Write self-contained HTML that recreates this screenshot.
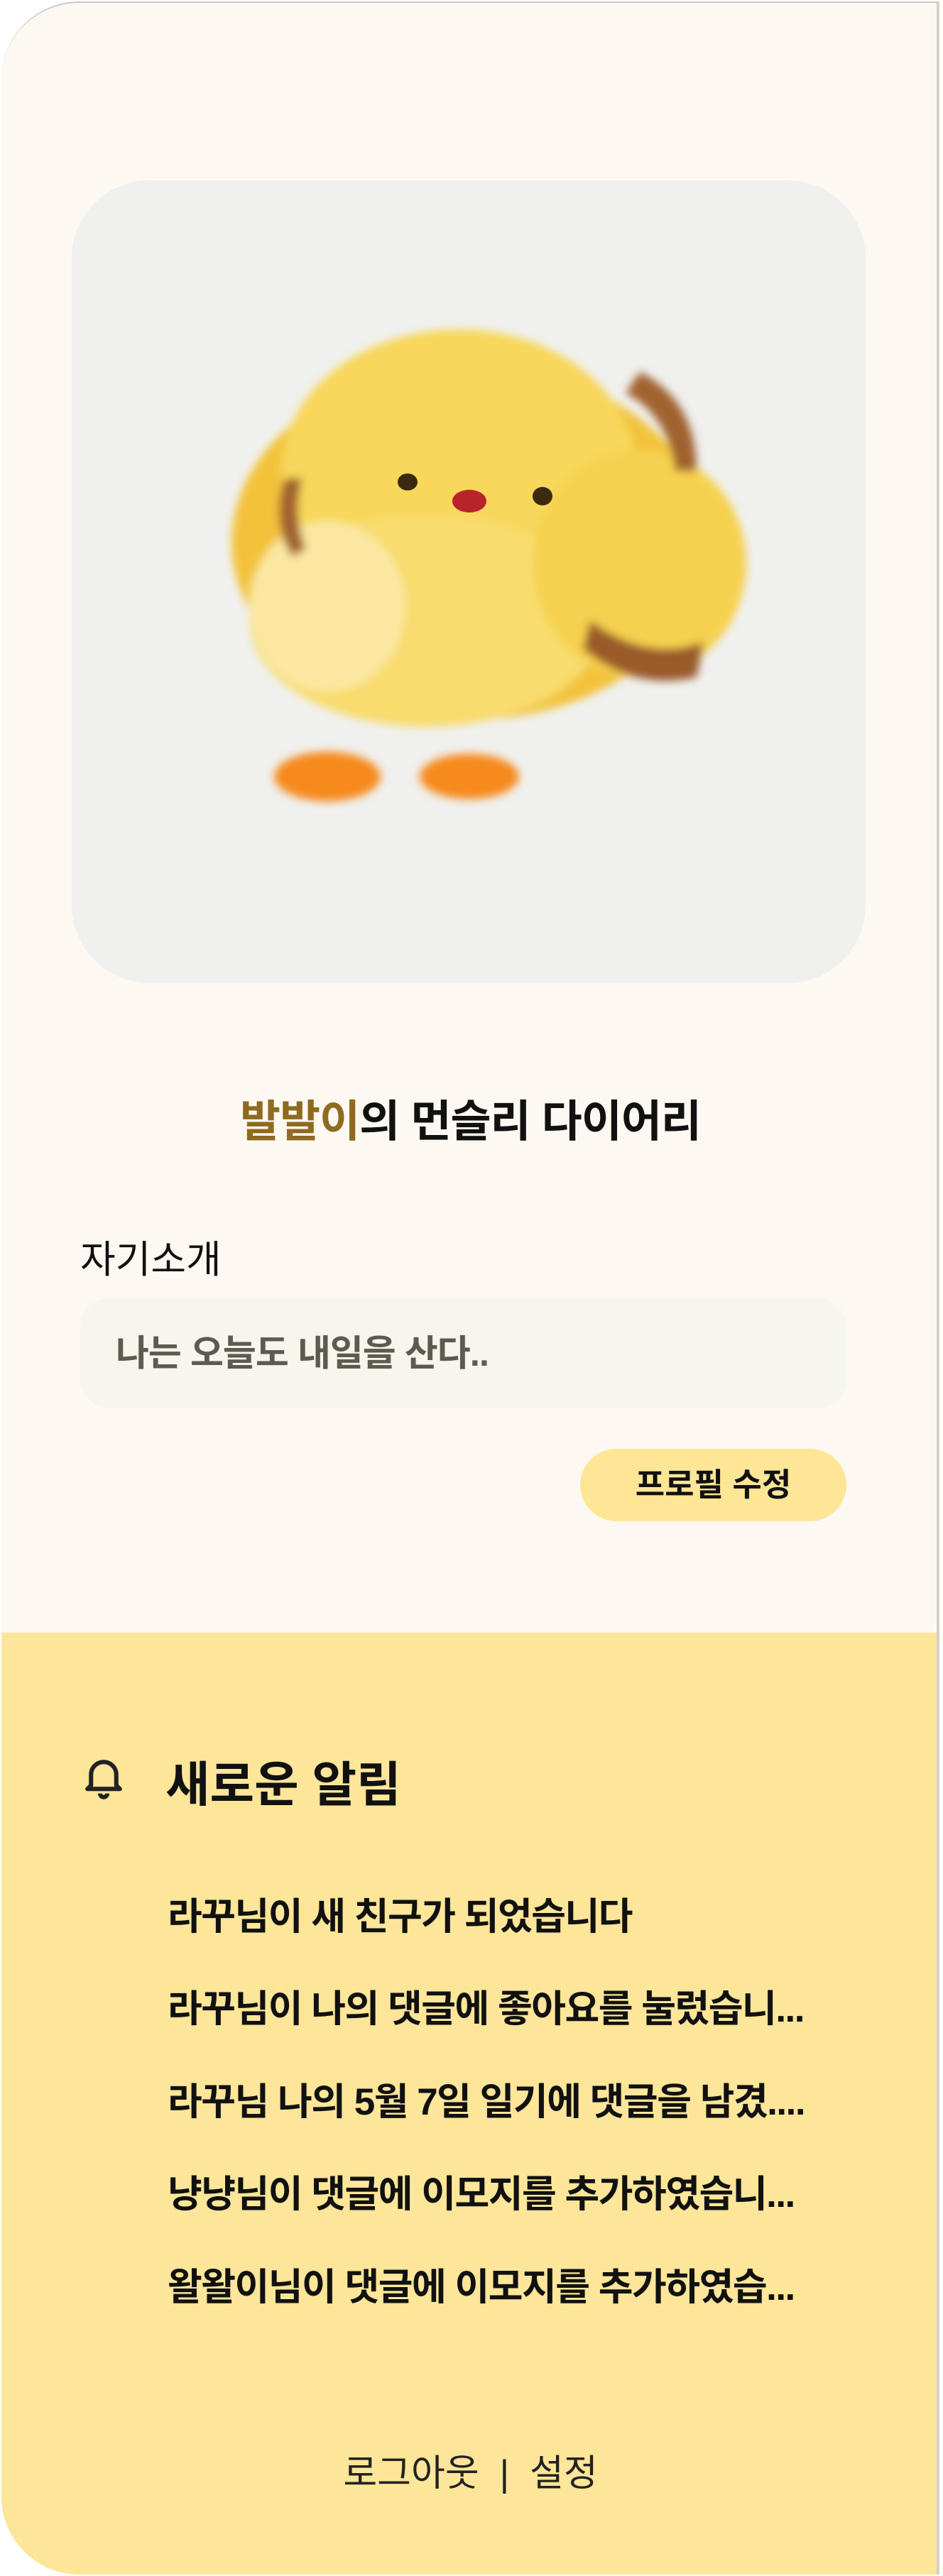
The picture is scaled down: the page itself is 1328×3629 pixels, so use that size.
<!DOCTYPE html>
<html><head><meta charset="utf-8"><style>
*{margin:0;padding:0;box-sizing:border-box}
html,body{width:1328px;height:3629px;background:#fff;overflow:hidden}
body{font-family:"Liberation Sans","Noto Sans CJK KR",sans-serif;position:relative}
.page{position:absolute;left:2px;top:2px;width:1321px;height:3625px;background:#fdf9f2;border-radius:110px 0 0 110px;border-top:2px solid #c8c8c8;border-right:4px solid #d4d0c6;overflow:hidden}
.img{position:absolute;left:99px;top:250px;width:1118px;height:1131px;background:#f0f0ee;border-radius:110px;overflow:hidden}
.title{position:absolute;left:0;width:1321px;top:1525px;text-align:center;font-size:62px;font-weight:bold;color:#111;letter-spacing:-1px}
.title span{color:#8f6a1f}
.lbl{position:absolute;left:111px;top:1726px;font-size:54px;color:#111}
.inp{position:absolute;left:111px;top:1825px;width:1079px;height:155px;background:#f6f5ee;border-radius:40px;font-size:51px;font-weight:bold;color:#5f5a4f;padding-left:50px;line-height:155px;letter-spacing:-1px}
.btn{position:absolute;left:815px;top:2037px;width:375px;height:102px;background:#ffe697;border-radius:51px;text-align:center;line-height:102px;font-size:45px;font-weight:bold;color:#111}
.yel{position:absolute;left:0;top:2296px;width:1321px;height:1330px;background:#fde699;border-radius:0 0 0 110px}
.bell{position:absolute;left:113px;top:2468px}
.nt{position:absolute;left:231px;top:2455px;font-size:68px;font-weight:bold;color:#111}
.n{position:absolute;left:234px;font-size:53px;font-weight:bold;color:#111;letter-spacing:-1.5px}
.ft{position:absolute;left:0;width:1321px;top:3438px;text-align:center;font-size:52px;color:#222}
</style></head><body>
<div class="page">
<div class="img">
<svg width="1118" height="1131" viewBox="0 0 1118 1131">
<defs><filter id="b" x="-20%" y="-20%" width="140%" height="140%"><feGaussianBlur stdDeviation="6"/></filter></defs>
<g filter="url(#b)">
<path d="M420 280 q30 -30 70 -20 q40 -20 80 0 l-10 30 q-60 -10 -130 10z" fill="#9a5a2a"/>
<ellipse cx="560" cy="510" rx="335" ry="250" fill="#f3c23a"/>
<ellipse cx="545" cy="410" rx="250" ry="200" fill="#f8d75a"/>
<ellipse cx="500" cy="620" rx="250" ry="150" fill="#f8dc6e"/>
<ellipse cx="360" cy="600" rx="110" ry="120" fill="#fbe7a0"/>
<ellipse cx="800" cy="540" rx="150" ry="160" fill="#f6d150"/>
<path d="M730 620 q80 60 160 30 l-10 50 q-90 20 -160 -40z" fill="#9a5a2a"/>
<path d="M800 270 q80 40 80 140 l-30 0 q-10 -80 -70 -110z" fill="#a0622d"/>
<path d="M300 420 q-20 60 10 110 l20 -10 q-20 -50 -5 -100z" fill="#a0622d"/>
<ellipse cx="360" cy="840" rx="75" ry="35" fill="#f68a1f"/>
<ellipse cx="560" cy="840" rx="70" ry="32" fill="#f68a1f"/>
</g>
<ellipse cx="473" cy="425" rx="14" ry="12" fill="#3a2a10"/>
<ellipse cx="663" cy="445" rx="14" ry="13" fill="#3a2a10"/>
<ellipse cx="560" cy="452" rx="24" ry="16" fill="#b8242a"/>
</svg>
</div>
<div class="title"><span>발발이</span>의 먼슬리 다이어리</div>
<div class="lbl">자기소개</div>
<div class="inp">나는 오늘도 내일을 산다..</div>
<div class="btn">프로필 수정</div>
<div class="yel"></div>
<svg class="bell" width="62" height="66" viewBox="0 0 24 26"><path d="M5 17 V11 a7 7 0 0 1 14 0 V17 L21 19 H3 Z" fill="none" stroke="#222" stroke-width="2.4" stroke-linejoin="round"/><path d="M10 21.5 a2 2 0 0 0 4 0" fill="none" stroke="#222" stroke-width="2.4"/></svg>
<div class="nt">새로운 알림</div>
<div class="n" style="top:2654px">라꾸님이 새 친구가 되었습니다</div>
<div class="n" style="top:2784px">라꾸님이 나의 댓글에 좋아요를 눌렀습니...</div>
<div class="n" style="top:2915px">라꾸님 나의 5월 7일 일기에 댓글을 남겼....</div>
<div class="n" style="top:3045px">냥냥님이 댓글에 이모지를 추가하였습니...</div>
<div class="n" style="top:3176px">왈왈이님이 댓글에 이모지를 추가하였습...</div>
<div class="ft">로그아웃 &nbsp;|&nbsp; 설정</div>
</div>
</body></html>
